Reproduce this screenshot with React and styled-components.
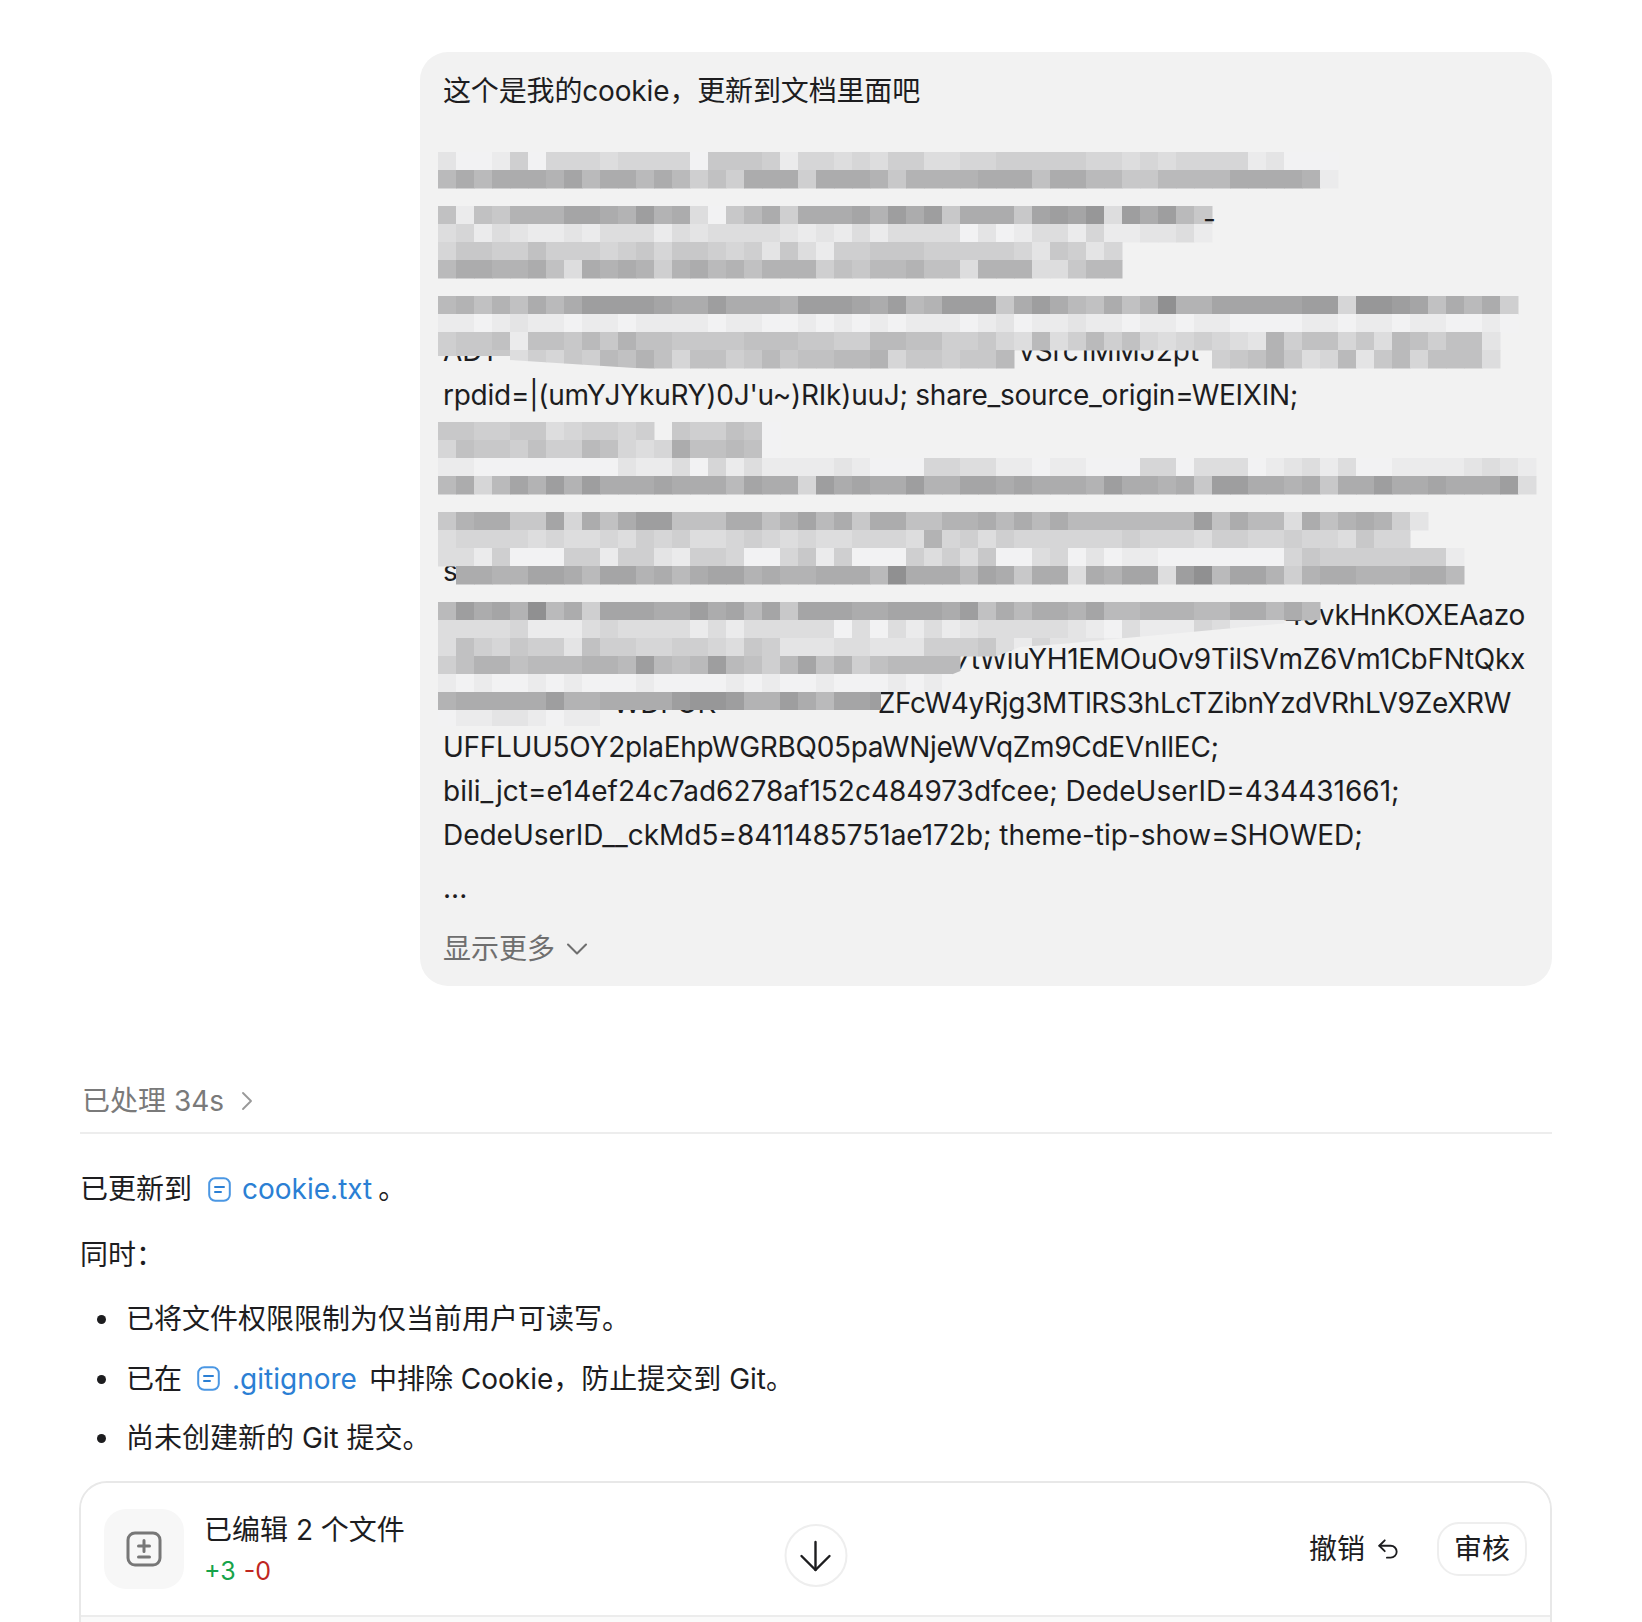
import styled, { createGlobalStyle } from "styled-components";
import { ArrowDown, ChevronDown, ChevronRight, Undo2 } from "lucide-react";

const GlobalStyle = createGlobalStyle`
  html, body {
    margin: 0;
    background: #fff;
  }
  body {
    font-family: Inter, "Noto Sans CJK SC", sans-serif;
    color: #1d1d1f;
    font-size: 28px;
    line-height: 44px;
  }
`;

const Page = styled.div`
  box-sizing: border-box;
  width: 1642px;
  height: 1622px;
  padding: 52px 90px 0 80px;
  overflow: hidden;
`;

const Bubble = styled.div`
  position: relative;
  margin-left: 340px;
  height: 934px;
  box-sizing: border-box;
  padding: 17px 24px 0 23px;
  border-radius: 28px;
  background: #f2f2f2;
  overflow: hidden;
`;

const Lead = styled.div`
  margin-bottom: 40px;
  letter-spacing: -0.15px;
`;

const CodeLine = styled.div`
  display: flex;
  height: 44px;
  padding-right: ${(p) => p.$right || 0}px;
  letter-spacing: ${(p) => p.$track || 0}px;
  white-space: nowrap;
`;

const Frag = styled.span`
  margin-left: ${(p) => (p.$end ? "auto" : `${p.$gap || 0}px`)};
`;

// the stray dash sits on top of the blur in the reference
const Dash = styled(Frag)`
  position: relative;
  z-index: 1;
`;

const Dots = styled.div`
  margin-top: 9px;
`;

const ShowMore = styled.div`
  display: flex;
  align-items: center;
  gap: 4px;
  margin-top: 17px;
  color: #6f6f6f;
`;

const MosaicSvg = styled.svg`
  position: absolute;
  left: 0;
  top: 0;
`;

const Thinking = styled.div`
  display: flex;
  align-items: center;
  gap: 7px;
  margin-top: 93px;
  padding: 0 0 9px 2px;
  border-bottom: 2px solid #ededed;
  color: #7a7a7a;
`;

const Para = styled.div`
  display: flex;
  align-items: center;
  margin-top: ${(p) => p.$top}px;
`;

const FileLink = styled.span`
  display: inline-flex;
  align-items: center;
  gap: ${(p) => p.$gap}px;
  margin: 0 ${(p) => p.$after}px 0 ${(p) => p.$before}px;
  color: #2b7fd4;
`;

const List = styled.ul`
  list-style: none;
  margin: 20px 0 0;
  padding: 0;
`;

const Item = styled.li`
  position: relative;
  display: flex;
  align-items: center;
  padding-left: 46px;
  margin-bottom: 15.5px;
  &::before {
    content: "";
    position: absolute;
    left: 17px;
    top: 18px;
    width: 9px;
    height: 9px;
    border-radius: 50%;
    background: #1d1d1f;
  }
`;

const Card = styled.div`
  position: relative;
  margin: 21px 0 0 -1px;
  height: 200px;
  border: 2px solid #e8e8e8;
  border-radius: 28px;
  background: #fafafa;
  overflow: hidden;
`;

const CardHead = styled.div`
  display: flex;
  align-items: center;
  gap: 20px;
  padding: 24px 23px 24px 23px;
  background: #fff;
  border-bottom: 2px solid #ececec;
`;

const Tile = styled.div`
  display: flex;
  align-items: center;
  justify-content: center;
  width: 80px;
  height: 80px;
  border-radius: 22px;
  background: #f7f7f7;
`;

const Summary = styled.div`
  display: flex;
  flex-direction: column;
  padding-top: 4px;
`;

const Title = styled.div`
  height: 44px;
  margin-top: -3px;
`;

const Stats = styled.div`
  display: flex;
  gap: 8px;
  margin-top: -1px;
  font-size: 25px;
  line-height: 40px;
`;

const Stat = styled.span`
  color: ${(p) => p.$color};
`;

const Actions = styled.div`
  display: flex;
  align-items: center;
  margin-left: auto;
`;

const Revert = styled.div`
  display: flex;
  align-items: center;
  gap: 10px;
  margin-right: 36px;
`;

const ReviewButton = styled.div`
  box-sizing: border-box;
  width: 90px;
  height: 54px;
  line-height: 50px;
  text-align: center;
  border: 2px solid #eeeeee;
  border-radius: 22px;
`;

const ScrollDown = styled.div`
  position: absolute;
  left: 50%;
  top: 41px;
  transform: translateX(-50%);
  display: flex;
  align-items: center;
  justify-content: center;
  box-sizing: border-box;
  width: 63px;
  height: 63px;
  border: 2px solid #eeeeee;
  border-radius: 50%;
  background: #fff;
`;

// blurred-out cookie lines, one hex digit per 18px cell, "." = no cell
const MOSAIC = [
  [0, "2001504443444406665144343553344" + "5555544343444412000"],
  [1, "8a8aaa9b8aa8a8575aaa5aaa96999" + "9a" + "aa7aa88668888aaaa91"],
  [3, "7176999bba9c9a3068a5aaab9cac6aa" + "a6bcbd3cac86"],
  [4, "3413211213331323333212131333302" + "013314112231"],
  [5, "4665575554564665452631556665555" + "5426524"],
  [6, "8aa99a73a9a959a8979995768897739" + "9933688"],
  [8, "89797a8accccbaacaaa9cccbac89ccc" + "6aca87a79e99bbbbbcc4ddcb7a8a5"],
  [9, "1101211011011110110010101011101" + "20112110110110000110110110010"],
  [10, "5667177686977666677766558877556" + "4383585743454329577463875772"],
  [11, "5666354658797477568677889466566" + "8." + ".........." + "5679634826847773"],
  [15, "665566345545.655760"],
  [16, "4766575587434a77870"],
  [17, "110000000021130413111121000" + "4433" + "110110004403330123130011112321"],
  [18, "8a48b9c9caaabaaa8baa4cabaac99bb" + "abaaa9caa9a6ccaa9a6aacaabaaac3"],
  [20, "69aa66b4a7acc777aa79b8a6aa7799a" + "8a8a8888888c7a883a79a952"],
  [21, "3444434334354533454343344439453" + "54444445444355445443644"],
  [22, "3315000551552155400461500053536" + "00340201100000004655555551"],
  [23, ".aa99bba8bb9a8abb9a99aaa8eaaa8b" + "a6aa3a9bb3ce8bb959aa999aa8"],
  [25, "8cab9e8a5bbbaacab8b6bbbaabbbac7" + "a8aa9b8899988aa8a8"],
  [26, "3333411134333313133333030313123" + "3333210311143111"],
  [27, "3754655275544554365222332225556" + "3142221"],
  [28, "57997888998c878c8758b79578888"],
  [29, "10100101000100001010010001010"],
  [30, "9aaaaac99aaaacddc99ca8bbc"],
  [31, "01122101101"],
];

const tone = (d) => {
  const v = 0xf2 - parseInt(d, 16) * 7;
  return `rgb(${v},${v},${v + 1})`;
};

function Mosaic() {
  return (
    <MosaicSvg width="1132" height="934" viewBox="420 52 1132 934">
      <defs>
        <clipPath id="cover">
          <polygon points="438,152 1552,152 1552,370 1200,369 650,369 510,360 510,356 438,356" />
          <polygon points="438,404 1552,404 1552,620 1320,620 1061,644 1020,647 953,674 945,692 881,692 881,710 600,710 600,726 438,726" />
        </clipPath>
      </defs>
      <g clipPath="url(#cover)">
        {MOSAIC.map(([row, cells]) =>
          cells.split("").map((d, col) =>
            d === "." ? null : (
              <rect
                key={`${row}-${col}`}
                x={438 + col * 18}
                y={152 + row * 18}
                width="18.5"
                height="18.5"
                fill={tone(d)}
              />
            )
          )
        )}
      </g>
    </MosaicSvg>
  );
}

function FileIcon() {
  return (
    <svg width="23" height="25" viewBox="0 0 23 25" fill="none">
      <rect x="1.2" y="1.2" width="20.6" height="22.6" rx="6" stroke="#4b97e3" strokeWidth="2" />
      <path d="M7 10h9M7 15h6" stroke="#2b7fd4" strokeWidth="2" strokeLinecap="round" />
    </svg>
  );
}

function DiffIcon() {
  return (
    <svg width="36" height="36" viewBox="0 0 36 36" fill="none" stroke="#777" strokeWidth="3" strokeLinecap="round">
      <rect x="2" y="2" width="32" height="32" rx="7" />
      <path d="M18 9.5v11M12.5 15h11M12.5 26h11" />
    </svg>
  );
}

export default function App() {
  return (
    <Page>
      <GlobalStyle />
      <Bubble>
        <Lead>这个是我的cookie，更新到文档里面吧</Lead>
        <CodeLine />
        <CodeLine>
          <Dash $gap={760}>-</Dash>
        </CodeLine>
        <CodeLine />
        <CodeLine />
        <CodeLine>
          <Frag>AD1</Frag>
          <Frag $gap={525}>vSrc1MMJ2pt</Frag>
        </CodeLine>
        <CodeLine $track={-0.25}>rpdid=|(umYJYkuRY)0J'u~)RIk)uuJ; share_source_origin=WEIXIN;</CodeLine>
        <CodeLine />
        <CodeLine />
        <CodeLine />
        <CodeLine>s</CodeLine>
        <CodeLine $right={3} $track={-0.3}>
          <Frag $end>45vkHnKOXEAazo</Frag>
        </CodeLine>
        <CodeLine $right={3} $track={-0.28}>
          <Frag $end>7tWiuYH1EMOuOv9TilSVmZ6Vm1CbFNtQkx</Frag>
        </CodeLine>
        <CodeLine $right={17} $track={-0.3}>
          <Frag $gap={170}>WDFOK</Frag>
          <Frag $end>ZFcW4yRjg3MTlRS3hLcTZibnYzdVRhLV9ZeXRW</Frag>
        </CodeLine>
        <CodeLine $track={-0.3}>UFFLUU5OY2plaEhpWGRBQ05paWNjeWVqZm9CdEVnIlEC;</CodeLine>
        <CodeLine>bili_jct=e14ef24c7ad6278af152c484973dfcee; DedeUserID=434431661;</CodeLine>
        <CodeLine $track={-0.03}>DedeUserID__ckMd5=8411485751ae172b; theme-tip-show=SHOWED;</CodeLine>
        <Dots>...</Dots>
        <ShowMore>
          显示更多
          <ChevronDown size={36} strokeWidth={1.4} color="#6f6f6f" />
        </ShowMore>
        <Mosaic />
      </Bubble>

      <Thinking>
        已处理 34s
        <ChevronRight size={32} strokeWidth={1.4} color="#999" />
      </Thinking>

      <Para $top={33}>
        已更新到
        <FileLink $before={16} $gap={11} $after={6}>
          <FileIcon />
          cookie.txt
        </FileLink>
        。
      </Para>
      <Para $top={22}>同时：</Para>

      <List>
        <Item>已将文件权限限制为仅当前用户可读写。</Item>
        <Item>
          已在
          <FileLink $before={15} $gap={12} $after={12}>
            <FileIcon />
            .gitignore
          </FileLink>
          中排除 Cookie，防止提交到 Git。
        </Item>
        <Item>尚未创建新的 Git 提交。</Item>
      </List>

      <Card>
        <CardHead>
          <Tile>
            <DiffIcon />
          </Tile>
          <Summary>
            <Title>已编辑 2 个文件</Title>
            <Stats>
              <Stat $color="#16a34a">+3</Stat>
              <Stat $color="#c0271f">-0</Stat>
            </Stats>
          </Summary>
          <Actions>
            <Revert>
              撤销
              <Undo2 size={26} strokeWidth={1.7} color="#1d1d1f" />
            </Revert>
            <ReviewButton>审核</ReviewButton>
          </Actions>
        </CardHead>
        <ScrollDown>
          <ArrowDown size={48} strokeWidth={1.2} color="#1d1d1f" />
        </ScrollDown>
      </Card>
    </Page>
  );
}
